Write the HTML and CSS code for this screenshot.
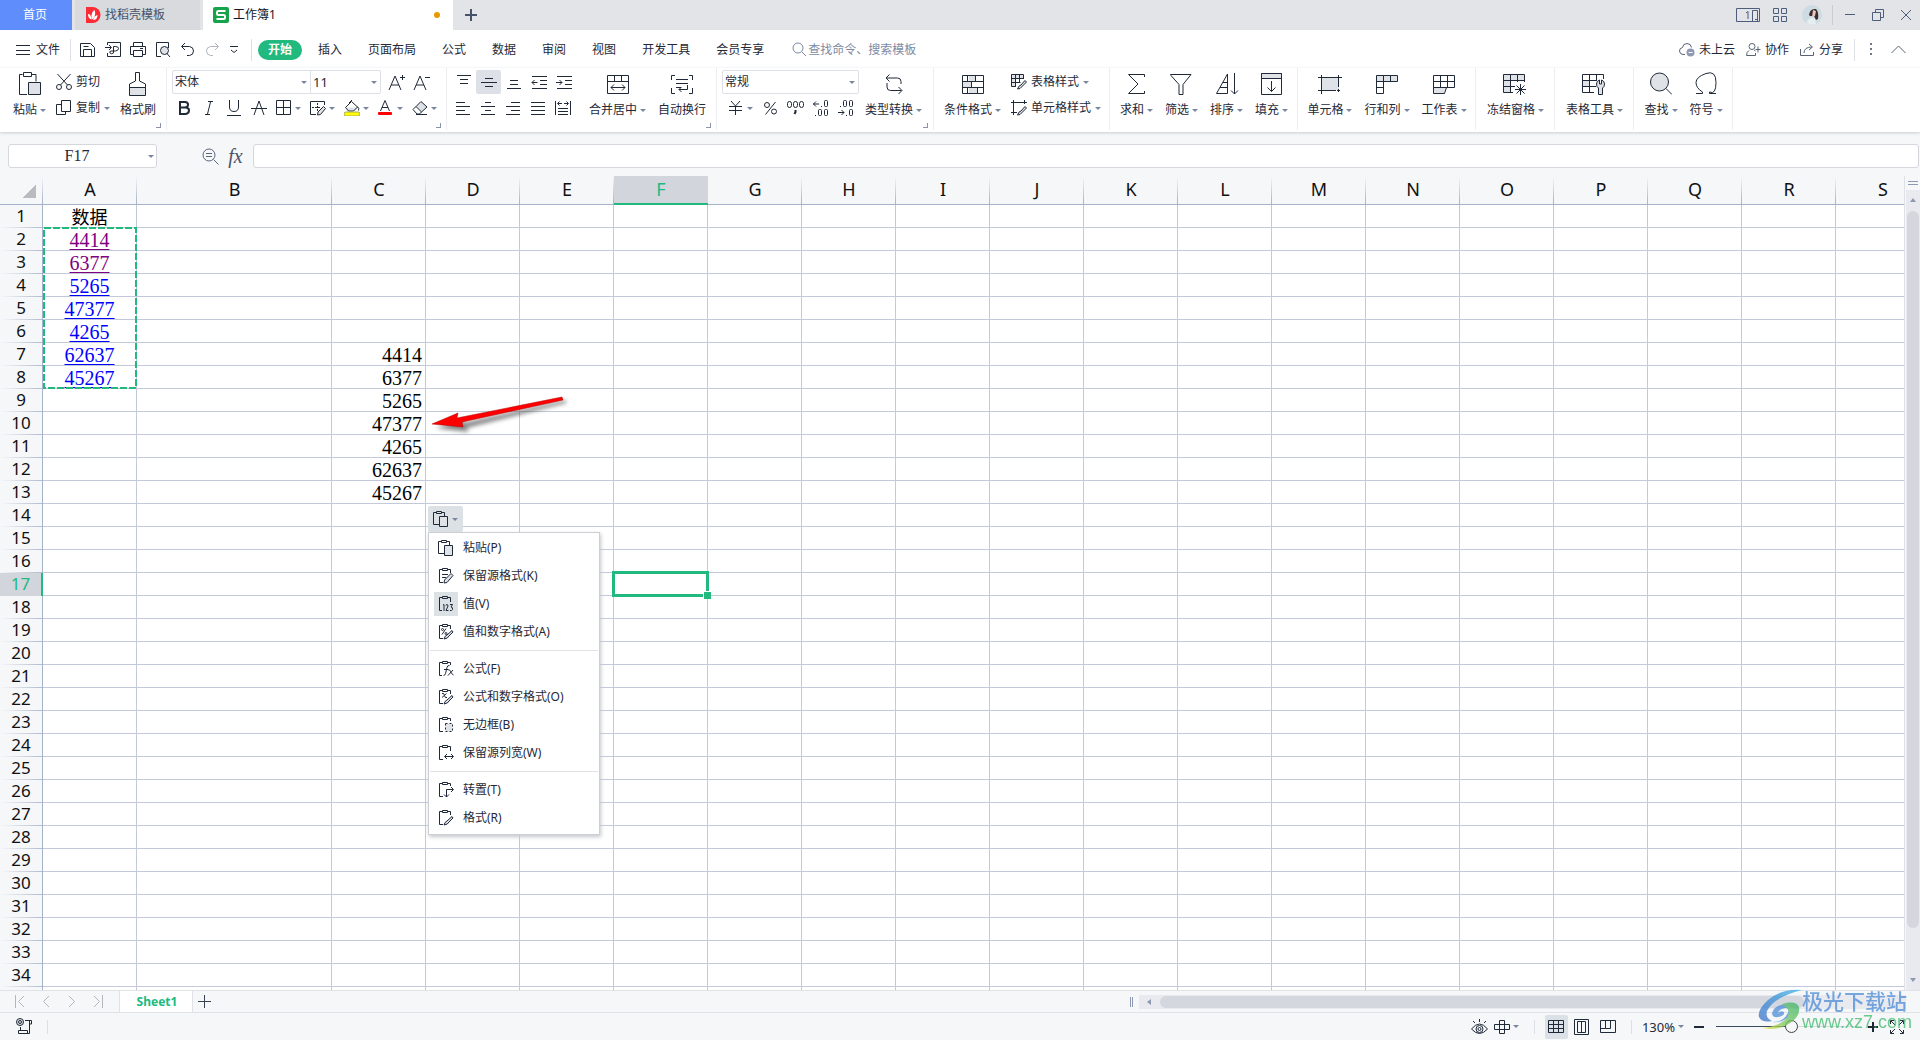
FILE: index.html
```
<!DOCTYPE html>
<html lang="zh-CN">
<head>
<meta charset="utf-8">
<title>工作簿1</title>
<link rel="stylesheet" href="styles.css">
</head>
<body>
<header class="tabbar">
  <button class="tab tab-home">首页</button>
  <button class="tab tab-doc">
    <svg width="16" height="16" viewBox="0 0 16 16"><path d="M1 0h6.500a8 8 0 0 1 0 16H1z" fill="#fb2c36"/><path d="M6.500 12.500C3.500 11.500 3 9 3 7c2 0 3.500 2 3.500 5.500zM7 12.500C6 9 6.500 5 9.500 3c1.500 4 .5 7-2.500 9.500zM8 13c.5-2.500 2-4.500 4.500-5 0 3-1.500 5-4.500 5z" fill="#fff"/></svg>
    <span>找稻壳模板</span>
  </button>
  <button class="tab tab-active">
    <svg width="16" height="16" viewBox="0 0 16 16"><rect width="16" height="16" rx="2" fill="#17a34a"/><path d="M12.500 4H5.500Q4 4 4 5.500V6.500Q4 8 5.500 8H10.500Q12 8 12 9.500V10.500Q12 12 10.500 12H3.500" fill="none" stroke="#fff" stroke-width="2"/></svg>
    <span>工作簿1</span><i class="dot"></i>
  </button>
  <button class="tab-add" aria-label="新建"><svg class="ic" width="14" height="14" viewBox="0 0 14 14"><path d="M7 1v12M1 7h12" stroke-width="2"/></svg></button>
  <div class="window-tools">
    <button aria-label="窗口" class="wt-wide"><svg class="ic" width="24" height="15" viewBox="0 0 24 15"><path d="M.5.500h23v13H.5zM16.500 2.500h5v11h-5zM19 11.500h2M10 5l2-1.500V11"/></svg></button>
    <button aria-label="应用" class="wt-apps"><svg class="ic" width="15" height="15" viewBox="0 0 15 15"><path d="M.5.500h5v5h-5zM8.500.500h5v5h-5zM.5 8.500h5v5h-5zM8.500 8.500h5v5h-5z"/></svg></button>
    <button aria-label="账户" class="avatar"><svg width="20" height="20" viewBox="0 0 20 20"><circle cx="10" cy="10" r="10" fill="#ccdce2"/><path d="M5 16q4-6 8-2l1 5q-5 2-9-1z" fill="#e6eef0"/><path d="M7 10q1-7 7-6 3 3 2 10l-2 1-2-4-4 0z" fill="#3d2c2d"/><path d="M11 5l3 1-1 5-3 1z" fill="#e9c9bd"/></svg></button>
    <i class="rule"></i>
    <button aria-label="最小化" class="win"><svg class="ic" width="12" height="12" viewBox="0 0 12 12"><path d="M1 5.500h10"/></svg></button>
    <button aria-label="还原" class="win"><svg class="ic" width="12" height="12" viewBox="0 0 12 12"><path d="M.5 3.500h8v8h-8zM3.500 3V.500h8v8H9"/></svg></button>
    <button aria-label="关闭" class="win"><svg class="ic" width="12" height="12" viewBox="0 0 12 12"><path d="M1 1l10 10M11 1L1 11"/></svg></button>
  </div>
</header>

<nav class="menubar">
  <button class="file"><svg class="ic" width="14" height="12" viewBox="0 0 14 12"><path d="M0 1.500h14M0 6.500h14M0 10.500h14"/></svg>文件</button>
  <i class="rule"></i>
  <div class="quick">
    <button aria-label="保存"><svg class="ic" width="16" height="16" viewBox="0 0 16 16"><path d="M.5 1.500h10l4 4v9H.5zM3.500 14V7.500h8V14M3.500 4.500h5"/></svg></button>
    <button aria-label="输出"><svg class="ic" width="16" height="16" viewBox="0 0 16 16"><path d="M2.500 3V.500h13v14h-13V11M0 5.500h6M4 3l2.500 2.500L4 8M8.500 11V4.500h2q3 0 3 2t-3 2.500H6Q4 9.500 5 11t3.500 0"/></svg></button>
    <button aria-label="打印"><svg class="ic" width="16" height="16" viewBox="0 0 16 16"><path d="M3.500 4.500v-4h9v4M3.500 12.500h-3v-8h15v8h-3M3.500 8.500h9v6h-9zM10 6.500h3"/></svg></button>
    <button aria-label="打印预览"><svg class="ic" width="16" height="16" viewBox="0 0 16 16"><path d="M6 14.500H1.500v-14h12V6"/><circle class="tone" cx="9.500" cy="8.500" r="4"/><path d="M12 11.500l3 3.500"/></svg></button>
    <button aria-label="撤销"><svg class="ic" width="16" height="16" viewBox="0 0 16 16"><path d="M5 1L1.500 4.500 5 8M2 4.500h7.500q4 .500 4 4.500t-4 4.500H7"/></svg></button>
    <button aria-label="恢复" class="off"><svg class="ic" width="16" height="16" viewBox="0 0 16 16"><path d="M10 1l3.500 3.500L10 8M13 4.500H5.500q-4 .500-4 4.500t4 4.500H8"/></svg></button>
    <button aria-label="更多"><svg class="ic" width="8" height="8" viewBox="0 0 8 8"><path d="M0 .500h8M1 4l3 2.500L7 4"/></svg></button>
  </div>
  <i class="rule"></i>
  <div class="menus">
    <button class="on">开始</button><button>插入</button><button>页面布局</button><button>公式</button><button>数据</button><button>审阅</button><button>视图</button><button>开发工具</button><button>会员专享</button>
  </div>
  <label class="search"><svg class="ic" width="15" height="15" viewBox="0 0 15 15"><circle cx="6" cy="6" r="5"/><path d="M10 10l4 4"/></svg><input type="text" placeholder="查找命令、搜索模板" aria-label="搜索"></label>
  <div class="share">
    <button><svg class="ic" width="16" height="14" viewBox="0 0 16 14"><path d="M6 11.500H4Q.5 11 .5 8t3-3.500Q4 .500 8 .500t4.500 4"/><circle cx="11.500" cy="9.500" r="4" fill="#8f99b3" stroke="none"/><path d="M9.500 9.500h4" stroke="#fff"/></svg>未上云</button>
    <button><svg class="ic" width="15" height="14" viewBox="0 0 15 14"><circle cx="6" cy="3.500" r="3"/><path d="M3 7.500Q.5 9 .5 12.500h9V10M8 7q1 .500 1.500 1M12 3.500v6M9.500 6.500h5"/></svg>协作</button>
    <button><svg class="ic" width="15" height="14" viewBox="0 0 15 14"><path d="M.5 6v6.500h13V9M4 10q0-6 8-6M9 1l3.500 3L9 7"/></svg>分享</button>
    <i class="rule"></i>
    <button aria-label="更多" class="dots"><svg width="3" height="13" viewBox="0 0 3 13"><path d="M0 0h2v2H0zM0 5h2v2H0zM0 10h2v2H0z" fill="#71778a"/></svg></button>
    <button aria-label="收起"><svg class="ic" width="15" height="9" viewBox="0 0 15 9"><path d="M.5 8l7-7 7 7"/></svg></button>
  </div>
</nav>

<section class="ribbon">
  <div class="group g-clip">
    <button class="big"><svg class="ic" width="22" height="24" viewBox="0 0 22 24"><path d="M8 22.500H.5v-20h3M13 2.500h4v7M4.500.500h8v4h-8z"/><path class="tone" d="M9.500 10.500h12v12h-12z"/></svg><span>粘贴<i class="caret"></i></span></button>
    <div class="stack">
      <button class="small"><svg class="ic" width="16" height="16" viewBox="0 0 16 16"><path d="M1.500 0l10 11M14.500 0l-10 11"/><circle cx="3" cy="13" r="2.500"/><circle cx="13" cy="13" r="2.500"/></svg>剪切</button>
      <button class="small"><svg class="ic" width="16" height="16" viewBox="0 0 16 16"><path d="M5.500.500h9v11h-9zM5 4.500H.5v10h9V12"/></svg>复制<i class="caret"></i></button>
    </div>
    <button class="big"><svg class="ic" width="20" height="24" viewBox="0 0 20 24"><path d="M7.500 9V.500h4V9l6 3v11h-16V12z"/><path class="tone" d="M1.500 15.500h16v8h-16z"/></svg><span>格式刷</span></button>
    <i class="corner"></i>
  </div>
  <div class="group g-font">
    <div class="stack">
      <div class="row">
        <label class="combo font-name"><select aria-label="字体"><option>宋体</option></select></label><label class="combo font-size"><select aria-label="字号"><option>11</option></select></label>
        <button class="sq" aria-label="增大字号"><svg class="ic" width="17" height="17" viewBox="0 0 17 17"><path d="M1 16L7 2l6 14M3 11h8M12 3.500h5M14.500 1v5"/></svg></button>
        <button class="sq" aria-label="减小字号"><svg class="ic" width="17" height="17" viewBox="0 0 17 17"><path d="M1 16L7 2l6 14M3 11h8M12 3.500h5"/></svg></button>
      </div>
      <div class="row marks">
        <button class="sq" aria-label="加粗"><svg class="ic" width="16" height="16" viewBox="0 0 16 16"><path d="M4 2h5q3 0 3 2.700T9 7.500H4zM4 7.500h5.500q3.500 0 3.500 3T9.500 14H4z" stroke-width="2"/></svg></button>
        <button class="sq" aria-label="倾斜"><svg class="ic" width="16" height="16" viewBox="0 0 16 16"><path d="M7 1.500h5M4 14.500h5M9.500 2l-3 12"/></svg></button>
        <button class="sq" aria-label="下划线"><svg class="ic" width="16" height="16" viewBox="0 0 16 16"><path d="M3.500 0v7q0 4.500 4.500 4.500T12.500 7V0M1 15.500h14"/></svg></button>
        <button class="sq" aria-label="删除线"><svg class="ic" width="16" height="16" viewBox="0 0 16 16"><path d="M3 15L8 1l5 14M0 8.500h16"/></svg></button>
        <button class="drop" aria-label="边框"><svg class="ic" width="16" height="16" viewBox="0 0 16 16"><path d="M.5.500h14v14H.5zM7.500.500v14M.5 7.500h14"/></svg><i class="caret"></i></button>
        <button class="drop" aria-label="绘图边框"><svg class="ic" width="16" height="16" viewBox="0 0 16 16"><path d="M14.500 5V1.500H.5v13H6"/><path d="M2 7.500h9M7.500 3v8" stroke-dasharray="2 1"/><path class="tone" d="M13.500 6.500l2 2-5 6-3 .5.500-3z"/></svg><i class="caret"></i></button>
        <button class="drop" aria-label="填充颜色"><svg class="ic" width="16" height="16" viewBox="0 0 16 16"><path class="tone" d="M2 7.500h12l-2 3H4z" stroke="none"/><path d="M7.500 1.500l6 5.500-4 4h-5L1.500 7.500zM5 3L8 0M13.500 6.500q2 2 1 4"/><rect x="0" y="12" width="16" height="4" rx="2" fill="#ff0" stroke="#a9a95a"/></svg><i class="caret"></i></button>
        <button class="drop" aria-label="字体颜色"><svg class="ic" width="16" height="16" viewBox="0 0 16 16"><path d="M2.500 11L7 .500 11.500 11M4 7.500h6"/><rect x="0" y="12" width="14" height="3" rx="1" fill="#f00" stroke="none"/></svg><i class="caret"></i></button>
        <button class="drop" aria-label="清除"><svg class="ic" width="16" height="16" viewBox="0 0 16 16"><path class="tone" d="M9 1.500L15 7 9.500 12 4 6.500z"/><path d="M4 6.500L1 9.500l4 4.500h2.500l2-2M4 14.500h11"/></svg><i class="caret"></i></button>
      </div>
    </div>
    <i class="corner"></i>
  </div>
  <div class="group g-align">
    <div class="stack aligns">
      <div class="row">
        <button class="sq" aria-label="顶端对齐"><svg class="ic" width="16" height="16" viewBox="0 0 16 16"><path d="M1 1.500h14M4 5.500h8M4 9.500h8"/></svg></button>
        <button class="sq on" aria-label="垂直居中"><svg class="ic" width="16" height="16" viewBox="0 0 16 16"><path d="M4 4.500h8M0 8.500h16M4 12.500h8"/></svg></button>
        <button class="sq" aria-label="底端对齐"><svg class="ic" width="16" height="16" viewBox="0 0 16 16"><path d="M4 6.500h8M4 10.500h8M1 14.500h14"/></svg></button>
        <button class="sq" aria-label="减少缩进"><svg class="ic" width="16" height="16" viewBox="0 0 16 16"><path d="M1 2.500h15M1 14.500h15M9 6.500h7M9 10.500h7M1 8.500h5.500M3.500 6L1 8.500 3.500 11"/></svg></button>
        <button class="sq" aria-label="增加缩进"><svg class="ic" width="16" height="16" viewBox="0 0 16 16"><path d="M1 2.500h15M1 14.500h15M9 6.500h7M9 10.500h7M0 8.500h6M3.500 6L6 8.500 3.500 11"/></svg></button>
      </div>
      <div class="row marks">
        <button class="sq" aria-label="左对齐"><svg class="ic" width="16" height="16" viewBox="0 0 16 16"><path d="M1 2.500h9M1 6.500h14M1 10.500h9M1 14.500h14"/></svg></button>
        <button class="sq" aria-label="水平居中"><svg class="ic" width="16" height="16" viewBox="0 0 16 16"><path d="M5 2.500h6M1 6.500h14M5 10.500h6M1 14.500h14"/></svg></button>
        <button class="sq" aria-label="右对齐"><svg class="ic" width="16" height="16" viewBox="0 0 16 16"><path d="M6 2.500h9M1 6.500h14M6 10.500h9M1 14.500h14"/></svg></button>
        <button class="sq" aria-label="两端对齐"><svg class="ic" width="16" height="16" viewBox="0 0 16 16"><path d="M1 2.500h14M1 6.500h14M1 10.500h14M1 14.500h14"/></svg></button>
        <button class="sq" aria-label="分散对齐"><svg class="ic" width="16" height="16" viewBox="0 0 16 16"><path d="M.5 1v14M15.500 1v14M3 3.500h4M9 3.500h4M4.500 1.500l-2 2 2 2M11.500 1.500l2 2-2 2M3 8.500h10M3 11.500h10M3 14.500h10"/></svg></button>
      </div>
    </div>
    <button class="big"><svg class="ic" width="22" height="24" viewBox="0 0 22 24"><path d="M.5 3.500h21v18H.5zM.5 9.500h21M7.500 4v5M14.500 4v5M4 15.500h14M7 12.500l-3 3 3 3M15 12.500l3 3-3 3"/></svg><span>合并居中<i class="caret"></i></span></button>
    <button class="big"><svg class="ic" width="22" height="24" viewBox="0 0 22 24"><path d="M4 3.500H.5V8M18 3.500h3.500V8M.5 16v5.500H4M21.500 16v5.500H18M5 7.500h12M5 11.500h12M5 15.500h5M16.500 13v4.500H8M10.500 15L8 17.500l2.500 2.500"/></svg><span>自动换行</span></button>
    <i class="corner"></i>
  </div>
  <div class="group g-num">
    <div class="stack">
      <label class="combo num-format"><select aria-label="数字格式"><option>常规</option></select></label>
      <div class="row nums">
        <button class="drop" aria-label="货币"><svg class="ic" width="16" height="16" viewBox="0 0 16 16"><path d="M3 1l4.500 5L12 1M1 6.500h13M1 10.500h13M7.500 6v9"/></svg><i class="caret"></i></button>
        <button class="sq" aria-label="百分比"><svg class="ic" width="16" height="16" viewBox="0 0 16 16"><circle cx="4" cy="5" r="2.500"/><circle cx="11" cy="11.500" r="2.500"/><path d="M12.500 2l-10 12.500"/></svg></button>
        <button class="sq" aria-label="千位分隔"><svg class="ic" width="17" height="16" viewBox="0 0 17 16"><rect x=".5" y="1.500" width="4" height="6" rx="2"/><rect x="6.500" y="1.500" width="4" height="6" rx="2"/><rect x="12.500" y="1.500" width="4" height="6" rx="2"/><path d="M8.500 10v2l-1 2" stroke-width="2"/></svg></button>
        <button class="sq" aria-label="增加小数"><svg class="ic" width="16" height="17" viewBox="0 0 16 17"><path d="M0 4h6M3 1.500L.5 4 3 6.500M8 6.500h1M2 15.500h1"/><rect x="11.500" y=".5" width="3" height="6" rx="1"/><rect x="5.500" y="9.500" width="3" height="6" rx="1"/><rect x="11.500" y="9.500" width="3" height="6" rx="1"/></svg></button>
        <button class="sq" aria-label="减少小数"><svg class="ic" width="16" height="17" viewBox="0 0 16 17"><path d="M0 12.500h6M3.500 10L6 12.500 3.500 15M8 15.500h1M2 6.500h1"/><rect x="11.500" y="9.500" width="3" height="6" rx="1"/><rect x="5.500" y=".5" width="3" height="6" rx="1"/><rect x="11.500" y=".5" width="3" height="6" rx="1"/></svg></button>
      </div>
    </div>
    <button class="big"><svg class="ic" width="20" height="24" viewBox="0 0 20 24"><path d="M5.500 2.500L2 6l3.500 3.500M2 6h11.500q3.500 0 3.500 3.500V12M3 11v4q0 3.500 3.500 3.500h11M14.500 15l3.500 3.500-3.500 3.500"/></svg><span>类型转换<i class="caret"></i></span></button>
    <i class="corner"></i>
  </div>
  <div class="group g-style">
    <button class="big"><svg class="ic" width="22" height="24" viewBox="0 0 22 24"><path class="tone" d="M7 4h6v6H7zM1 10h9v6H1zM7 16h9v6H7z" stroke="none"/><path d="M.5 3.500h21v18H.5zM.5 9.500h21M.5 15.500h21M5.500 4v6M13.500 4v6M9.500 10v5M5.500 15v6M15.500 15v6"/></svg><span>条件格式<i class="caret"></i></span></button>
    <div class="stack">
      <button class="small"><svg class="ic" width="16" height="16" viewBox="0 0 16 16"><path class="tone" d="M1 1h12v3H1zM1 4h3v9H1z" stroke="none"/><path d="M5 12.500H.5V.500h12V5M.5 4.500h12M.5 8.500h9M4.500 1v11M8.500 1v8"/><path class="tone" d="M14 6.500l1.500 1.500-5 5q-1 2-4 2 1.500-4 3.500-4z"/></svg>表格样式<i class="caret"></i></button>
      <button class="small"><svg class="ic" width="16" height="16" viewBox="0 0 16 16"><path d="M0 2.500h16M2.500 0v15M0 12.500h6M13.500 0v4"/><path class="tone" d="M14 6.500l1.500 1.500-5 5q-1 2-4 2 1.500-4 3.500-4z"/></svg>单元格样式<i class="caret"></i></button>
    </div>
  </div>
  <div class="group g-edit">
    <button class="big"><svg class="ic" width="18" height="24" viewBox="0 0 18 24"><path d="M17.500 5V2.500H1.500l9.500 9.500-9.500 9.500h16V19"/></svg><span>求和<i class="caret"></i></span></button>
    <button class="big"><svg class="ic" width="22" height="24" viewBox="0 0 22 24"><path d="M.5 2.500h20.500l-8 10v10h-4v-10l-8-9z"/></svg><span>筛选<i class="caret"></i></span></button>
    <button class="big"><svg class="ic" width="24" height="24" viewBox="0 0 24 24"><path d="M1.500 21.500L12.500 2v19.500zM8 10.500h4M5 15.500h7M19.500 1v21M16 18.500l3.500 3.500 3.500-3.500"/></svg><span>排序<i class="caret"></i></span></button>
    <button class="big"><svg class="ic" width="22" height="24" viewBox="0 0 22 24"><path d="M.5 1.500h20v21H.5z"/><path class="tone" d="M.5 1.500h20v5H.5z"/><path d="M10.500 9v10.500M6.500 15.500l4 4 4-4"/></svg><span>填充<i class="caret"></i></span></button>
  </div>
  <div class="group g-cells">
    <button class="big"><svg class="ic" width="24" height="24" viewBox="0 0 24 24"><path class="tone" d="M3 6h18v12H3z" stroke="none"/><path d="M0 5.500h24M0 18.500h18M3.500 3v19M20.500 3v12M19 18.500h3M20.500 17v3"/></svg><span>单元格<i class="caret"></i></span></button>
    <button class="big"><svg class="ic" width="22" height="24" viewBox="0 0 22 24"><path class="tone" d="M.5 3.500h21v6h-21z"/><path d="M.5 9.500h7v12h-7zM7.500 4v5M14.500 4v5M.5 15.500h7"/></svg><span>行和列<i class="caret"></i></span></button>
    <button class="big"><svg class="ic" width="22" height="24" viewBox="0 0 22 24"><path class="tone" d="M.5 15.500h13l-2 6H.5z"/><path d="M.5 3.500h21v12H.5zM.5 9.500h21M7.500 4v11M14.500 4v11"/></svg><span>工作表<i class="caret"></i></span></button>
  </div>
  <div class="group g-one">
    <button class="big"><svg class="ic" width="24" height="24" viewBox="0 0 24 24"><path class="tone" d="M1 3h20v5H1zM1 8h6v12H1z" stroke="none"/><path d="M10 20.500H.5v-18h21V10M.5 8.500h21M.5 14.500H12M7.500 3v17M14.500 3v7M17.500 12v11M12 17.500h11M13.500 13.500l8 8M21.500 13.500l-8 8"/></svg><span>冻结窗格<i class="caret"></i></span></button>
  </div>
  <div class="group g-one">
    <button class="big"><svg class="ic" width="24" height="24" viewBox="0 0 24 24"><path class="tone" d="M1 8h6v6H1z" stroke="none"/><path d="M12 20.500H.5v-18h21V7M.5 8.500H15M.5 14.500H14M7.500 3v17M14.500 3v5"/><path class="tone" d="M17.500 8v4h2V8q3 1 3 4t-2 4v6.500h-4V16q-2-1-2-4t3-4z"/></svg><span>表格工具<i class="caret"></i></span></button>
  </div>
  <div class="group g-find">
    <button class="big"><svg class="ic" width="22" height="24" viewBox="0 0 22 24"><circle class="tone" cx="9.500" cy="10" r="9"/><path d="M16 16.500l6 6"/></svg><span>查找<i class="caret"></i></span></button>
    <button class="big"><svg class="ic" width="22" height="24" viewBox="0 0 22 24"><path d="M1 21.500h6.500V20Q1 16 1 10.500T11 1.500t10 9T14.500 20v1.500H21"/></svg><span>符号<i class="caret"></i></span></button>
  </div>
</section>

<section class="formula">
  <div class="namebox"><input type="text" value="F17" aria-label="名称框"><i class="caret"></i></div>
  <button class="lens" aria-label="浏览公式"><svg class="ic" width="17" height="17" viewBox="0 0 17 17"><circle cx="7" cy="7" r="6"/><path d="M4 5.500h6M4 8.500h6M11.500 11.500l5 5"/></svg></button>
  <button class="fx" aria-label="插入函数"><i>fx</i></button>
  <input class="expr" type="text" aria-label="编辑栏">
</section>

<main class="sheet">
  <div class="grid">
    <table class="cells" id="cells"></table>
    <svg class="arrow" width="150" height="50" viewBox="0 0 150 50"><g filter="url(#soft)" opacity=".6"><path d="M6 33l28-9-1 4L136 5v3L36 33l3 4z" fill="#333"/></g><path d="M2 29l26-11-1 5L132 2l1 3L32 27l1 5z" fill="#f00" stroke="#b00000" stroke-width=".5"/><filter id="soft"><feGaussianBlur stdDeviation="2"/></filter></svg>
    <div class="paste">
      <button class="paste-tag" aria-label="粘贴选项"><svg class="ic" width="16" height="16" viewBox="0 0 16 16"><path d="M6 13.500H.5v-12H3M9 1.500h2.500V5M3.500.500h5v2h-5z"/><path class="tone" d="M6.500 5.500h8v10h-8z"/></svg><i class="caret"></i></button>
      <div class="paste-menu" role="menu">
        <button role="menuitem"><svg class="ic" width="16" height="16" viewBox="0 0 16 16"><path d="M6 13.500H.5v-12H3M9 1.500h2.500V5M3.500.500h5v2h-5z"/><path class="tone" d="M6.500 5.500h8v10h-8z"/></svg>粘贴(P)</button>
        <button role="menuitem"><svg class="ic" width="16" height="16" viewBox="0 0 16 16"><path d="M5 14.500H1.500v-13H4M10 1.500h2.500V5M4.500.500h5v2h-5zM4 6.500h6M4 9.500h4"/><path class="tone" d="M13 5.500l2 2-6 7-3 .500.500-3z"/></svg>保留源格式(K)</button>
        <button role="menuitem" class="on"><svg class="ic" width="16" height="16" viewBox="0 0 16 16"><path d="M4 14.500H1.500v-13H4M10 1.500h2.500V6M4.500.500h5v2h-5z"/><path d="M5 9l1-.500V15M8 9.500q0-1 1-1t1 1.500L8 14.500h2.500M12 8.500h2.500l-1.500 2.500q2 0 1.500 2.500-.5 1.500-2.500 1"/></svg>值(V)</button>
        <button role="menuitem"><svg class="ic" width="16" height="16" viewBox="0 0 16 16"><path d="M5 14.500H1.500v-13H4M10 1.500h2.500V5M4.500.500h5v2h-5zM8 4.500l-4 6"/><circle cx="4.500" cy="5.500" r="1"/><circle cx="8" cy="9.500" r="1"/><path class="tone" d="M14 6.500l1 1.500-4 4q-1 2.500-5 3 1-3.500 3-4z"/></svg>值和数字格式(A)</button>
        <hr>
        <button role="menuitem"><svg class="ic" width="16" height="16" viewBox="0 0 16 16"><path d="M4 14.500H1.500v-13H4M10 1.500h2.500V4M4.500.500h5v2h-5zM11.500 4.500q-2-.5-2.500 2l-1.500 6q-.5 2-2 2M6 8.500h4.500M10.500 9q1-1 2 1.500t3 3.500M15 9l-5 5.500"/></svg>公式(F)</button>
        <button role="menuitem"><svg class="ic" width="16" height="16" viewBox="0 0 16 16"><path d="M5 14.500H1.500v-13H4M10 1.500h2.500V5M4.500.500h5v2h-5zM4 4.500q2-1 2.500 2t2.500 2M8.500 4.500l-4.500 4"/><path class="tone" d="M14 6.500l1 1.500-4 4q-1 2.500-5 3 1-3.500 3-4z"/></svg>公式和数字格式(O)</button>
        <button role="menuitem"><svg class="ic" width="16" height="16" viewBox="0 0 16 16"><path d="M5 14.500H1.500v-13H4M10 1.500h2.500V4M4.500.500h5v2h-5z"/><path class="tone" d="M7.500 6.500h7v8h-7z" stroke-dasharray="2 2"/></svg>无边框(B)</button>
        <button role="menuitem"><svg class="ic" width="16" height="16" viewBox="0 0 16 16"><path d="M5 14.500H1.500v-13H4M10 1.500h2.500V6M4.500.500h5v2h-5zM7 11.500h8M9 9l-2.500 2.500L9 14M13 9l2.500 2.500L13 14"/></svg>保留源列宽(W)</button>
        <hr>
        <button role="menuitem"><svg class="ic" width="16" height="16" viewBox="0 0 16 16"><path d="M5 14.500H1.500v-13H4M10 1.500h2.500V4M4.500.500h5v2h-5zM8.500 15V7.500H15M6 12.500L8.500 15l2.500-2.500M13 5l2.500 2.500L13 10"/></svg>转置(T)</button>
        <button role="menuitem"><svg class="ic" width="16" height="16" viewBox="0 0 16 16"><path d="M5 14.500H1.500v-13H4M10 1.500h2.500V5M4.500.500h5v2h-5z"/><path class="tone" d="M14 6.500l1 1.500-4 4q-1 2.500-5 3 1-3.500 3-4z"/></svg>格式(R)</button>
      </div>
    </div>
  </div>
  <div class="vscroll">
    <i class="split"></i>
    <div class="track"><i class="up"></i><i class="thumb"></i><i class="down"></i></div>
  </div>
</main>

<footer class="sheets">
  <div class="nav">
    <button aria-label="第一个"><svg class="ic" width="10" height="13" viewBox="0 0 10 13"><path d="M.5 0v13M9 1L3.500 6.500 9 12"/></svg></button>
    <button aria-label="上一个"><svg class="ic" width="10" height="13" viewBox="0 0 10 13"><path d="M8 1L2.500 6.500 8 12"/></svg></button>
    <button aria-label="下一个"><svg class="ic" width="10" height="13" viewBox="0 0 10 13"><path d="M2 1l5.500 5.500L2 12"/></svg></button>
    <button aria-label="最后一个"><svg class="ic" width="10" height="13" viewBox="0 0 10 13"><path d="M9.500 0v13M1 1l5.500 5.500L1 12"/></svg></button>
  </div>
  <button class="sheet-tab">Sheet1</button>
  <button class="sheet-add" aria-label="新建工作表"><svg class="ic" width="13" height="13" viewBox="0 0 13 13"><path d="M6.500 0v13M0 6.500h13"/></svg></button>
  <div class="hscroll"><i class="grip"></i><div class="htrack"><i class="left"></i><i class="hthumb"></i></div></div>
</footer>

<footer class="status">
  <button class="macro" aria-label="录制"><svg class="ic" width="16" height="17" viewBox="0 0 16 17"><circle class="tone" cx="4" cy="4" r="3.500"/><circle cx="4" cy="4" r="1.500"/><path d="M9 2.500h4.500V15.500h-11v-3h9V15M4.500 9v3M13 2.500h2.500V6H14"/></svg></button>
  <i class="rule"></i>
  <div class="views">
    <button class="eye" aria-label="护眼"><svg class="ic" width="17" height="16" viewBox="0 0 17 16"><path d="M.5 10q8-10 16 0-8 9-16 0zM8.500 0v3M2 2l2 2M15 2l-2 2"/><circle cx="8.500" cy="10" r="3.500"/><circle cx="8.500" cy="10" r="1.500"/></svg></button>
    <button class="cross" aria-label="阅读"><svg class="ic" width="16" height="16" viewBox="0 0 16 16"><path d="M5.500 1.500h5v13h-5zM.5 5.500h15v5H.5z"/></svg><i class="caret"></i></button>
    <i class="rule"></i>
    <button class="view on" aria-label="普通视图"><svg class="ic" width="16" height="14" viewBox="0 0 16 14"><path d="M.5.500h15v12H.5zM.5 4.500h15M.5 8.500h15M5.500.500v12M10.500.500v12"/></svg></button>
    <button class="view" aria-label="分页预览"><svg class="ic" width="16" height="16" viewBox="0 0 16 16"><path d="M.5.500h14v15H.5zM3.500 2.500h8v11h-8zM7.500 3v10"/></svg></button>
    <button class="view" aria-label="页面布局"><svg class="ic" width="16" height="14" viewBox="0 0 16 14"><path d="M.5.500h15v12H.5zM5.500.500v8M.5 8.500h10v-8"/></svg></button>
    <i class="rule"></i>
    <button class="zoom">130%<i class="caret"></i></button>
    <button class="step" aria-label="缩小"><svg class="ic" width="10" height="10" viewBox="0 0 10 10"><path d="M0 5h10" stroke-width="2"/></svg></button>
    <input type="range" aria-label="显示比例" min="0" max="100" value="52">
    <button class="step plus" aria-label="放大"><svg class="ic" width="10" height="10" viewBox="0 0 10 10"><path d="M0 5h10M5 0v10" stroke-width="2"/></svg></button>
    <button class="full" aria-label="全屏"><svg class="ic" width="14" height="14" viewBox="0 0 14 14"><path d="M.5 4V.500H4M10 .500h3.500V4M13.500 10v3.500H10M4 13.500H.5V10M1 1l4 4M13 1L9 5M13 13L9 9M1 13l4-4"/></svg></button>
  </div>
</footer>

<div class="mark">
  <svg width="44" height="42" viewBox="0 0 44 42"><defs><linearGradient id="b" x1="1" y1="0" x2="0" y2="1"><stop offset="0" stop-color="#39b3e8"/><stop offset="1" stop-color="#3d6fc4"/></linearGradient><linearGradient id="g" x1="1" y1="0" x2="0" y2="1"><stop offset="0" stop-color="#35b36a"/><stop offset=".6" stop-color="#7cc85a"/><stop offset="1" stop-color="#f2e23c"/></linearGradient></defs><path d="M44 1Q24-1 10 11-1 21 1 28q3 6 13 4-7-3-5-10Q16 8 44 1z" fill="url(#b)"/><path d="M28 15q-12 1-14 9 0 5 6 4 7-1 6-5-5-2-6 2 0-5 8-6 5 1 0 8-4 6-14 6 8 1 16-4 8-8-2-14z" fill="#4d8fd8"/><path d="M24 15q14-4 17 3 2 10-12 18-12 6-25 3 14-1 23-8 9-9-3-16z" fill="url(#g)"/></svg>
  <div><b>极光下载站</b><span>www.xz7.com</span></div>
</div>
<script src="script.js"></script>
</body>
</html>
```
FILE: styles.css
```
* { box-sizing: border-box; }
html, body { height: 100%; margin: 0; overflow: hidden; }
body {
  display: flex; flex-direction: column; position: relative;
  font: 12px/16px "Noto Sans", "Noto Sans CJK SC", sans-serif;
  color: #1f2937; background: #f6f7f9;
}
button, input, select { font: inherit; color: inherit; border: 0; padding: 0; margin: 0; background: none; outline: 0; }
button { display: flex; align-items: center; justify-content: center; white-space: nowrap; flex: none; }
svg { display: block; flex: none; }
.ic { fill: none; stroke: currentColor; }
.tone { fill: #dfe2e6; }
.caret { border: 3px solid transparent; border-top-color: #7a869f; border-bottom: 0; margin-left: 3px; flex: none; }
.rule { width: 1px; background: #dcdfe5; flex: none; }

.tabbar { display: flex; height: 30px; flex: none; background: #e2e4e8; color: #44536b; }
.tab { height: 30px; gap: 4px; }
.tab-home { width: 72px; padding-right: 2px; background: #5f8dfb; color: #fff; }
.tab-doc { width: 125px; margin-left: 3px; padding-left: 10px; background: #d8dade; justify-content: flex-start; }
.tab-active { width: 250px; margin-left: 3px; padding: 0 13px 0 10px; background: #fff; color: #111827; justify-content: flex-start; }
.dot { width: 6px; height: 6px; border-radius: 3px; background: #e69a00; margin-left: auto; }
.tab-add { width: 36px; }
.window-tools { display: flex; align-items: center; margin-left: auto; color: #4e5d7c; }
.wt-apps { margin-left: 13px; }
.avatar { margin: 0 10px 0 14px; }
.window-tools .rule { height: 20px; background: #c9ccd3; margin-right: 3px; }
.win { width: 28px; height: 30px; }

.menubar { display: flex; align-items: center; height: 38px; flex: none; padding-top: 1px; background: #fff; }
.menubar > .rule, .share .rule { height: 22px; }
.file { gap: 6px; padding: 0 10px 0 16px; }
.quick { display: flex; align-items: center; gap: 9px; padding: 0 13px 0 9px; }
.quick button { min-width: 8px; }
.quick .off { color: #b3b6bd; }
.menus { display: flex; align-items: center; padding-left: 6px; }
.menus button { padding: 0 13px; height: 20px; }
.menus .on { background: #21b97e; color: #fff; font-weight: 700; border-radius: 10px; padding: 0 10px; margin-right: 3px; }
.search { display: flex; align-items: center; gap: 1px; padding-left: 15px; color: #7c8aa5; }
.search input { width: 140px; }
.search input::placeholder { color: #7c8aa5; opacity: 1; }
.share { display: flex; align-items: center; gap: 11px; margin-left: auto; padding-right: 14px; }
.share button { gap: 4px; }
.share svg { color: #5a6375; }
.share .dots { margin: 0 7px 0 4px; }

.ribbon { display: flex; height: 64px; flex: none; background: #fff; box-shadow: 0 1px 3px #c9ccd2; position: relative; }
.group { position: relative; display: flex; flex: none; height: 64px; }
.group::after { content: ""; position: absolute; right: 0; top: 0; height: 62px; width: 1px; background: #eceef1; }
.g-clip { width: 167px; padding-left: 7px; gap: 4px; }
.g-font { width: 280px; padding-left: 5px; }
.g-align { width: 270px; padding-left: 4px; }
.g-num { width: 217px; padding-left: 5px; }
.g-style { width: 176px; padding-left: 4px; gap: 4px; }
.g-edit { width: 188px; justify-content: center; }
.g-cells { width: 178px; justify-content: center; }
.g-one { width: 79px; justify-content: center; }
.g-find { width: 99px; justify-content: center; }
.big { flex-direction: column; justify-content: flex-start; height: 55px; padding: 4px 6px 0; }
.big span { display: flex; align-items: center; height: 24px; margin-top: 2px; }
.stack { display: flex; flex-direction: column; gap: 2px; padding-top: 2px; }
.small { height: 24px; gap: 4px; justify-content: flex-start; }
.small .caret { margin-left: 0; }
.row { display: flex; height: 24px; align-items: center; }
.sq { width: 25px; height: 24px; }
.marks .sq { padding-right: 1px; }
.sq.on { background: #dde1e7; border-radius: 2px; }
.drop { width: 34px; height: 24px; justify-content: flex-start; padding-left: 4px; }
.combo { display: flex; align-items: center; height: 24px; border: 1px solid #dddfe4; border-radius: 2px; padding: 0 3px 0 2px; }
.combo::after { content: ""; border: 3px solid transparent; border-top-color: #7a869f; border-bottom: 0; }
.combo select { appearance: none; flex: 1; min-width: 0; }
.font-name { width: 139px; border-radius: 2px 0 0 2px; }
.font-size { width: 71px; margin: 0 3px 0 -1px; border-radius: 0 2px 2px 0; font-size: 13px; }
.num-format { width: 137px; }
.aligns { margin-right: 7px; }
.nums { padding-left: 2px; }
.corner { position: absolute; right: 6px; bottom: 4px; width: 5px; height: 5px; border: solid #8b94a8; border-width: 0 1px 1px 0; }

.formula { display: flex; align-items: center; height: 44px; flex: none; padding: 4px 1px 0 8px; }
.namebox { display: flex; align-items: center; width: 149px; height: 24px; border: 1px solid #d5d7dd; border-radius: 3px; background: #fff; padding-right: 2px; }
.namebox input { flex: 1; min-width: 0; text-align: center; font: 16px/20px "Liberation Serif", serif; }
.lens { margin-left: 45px; color: #5c6780; }
.fx { width: 15px; margin: 0 10px 0 9px; font: 20px/20px "Liberation Serif", serif; color: #4a5468; }
.expr { flex: 1; min-width: 0; height: 24px; border: 1px solid #d5d7dd; border-radius: 3px; background: #fff; }

.sheet { display: flex; flex: 1; min-height: 0; }
.grid { flex: 1; min-width: 0; overflow: hidden; position: relative; background: #fff; }
.cells { table-layout: fixed; border-collapse: separate; border-spacing: 0; width: 1930px; }
.cells th { font-weight: 400; padding: 0 0 2px; color: #111; background: #f6f7f9 no-repeat; }
.cells thead th { height: 29px; font-size: 18px; line-height: 24px; border-bottom: 1px solid #a6b1ca; background-image: linear-gradient(#f6f7f9, #a6b1ca); background-size: 1px 100%; background-position: right; }
.cells thead th.on { background: #d2d5dc; color: #21b97e; border-bottom: 2px solid #21b97e; }
.cells thead .all { background-image: linear-gradient(135deg, transparent 50%, #b9bbc0 50%), linear-gradient(#f6f7f9, #a6b1ca); background-size: 14px 14px, 1px 100%; background-position: 22px 8px, right; }
.cells tbody th { height: 23px; font-size: 17px; line-height: 20px; border-right: 1px solid #a6b1ca; background-image: linear-gradient(90deg, #f6f7f9, #b3bbd0); background-size: 100% 1px; background-position: bottom; }
.cells tbody th.on { background: #d2d5dc; color: #21b97e; border-right: 2px solid #21b97e; }
.cells td { position: relative; height: 23px; padding: 0 3px; border: solid #c3c9da; border-width: 0 1px 1px 0; font: 20px/24px "Liberation Serif", serif; color: #000; }
.cells td > div { height: 22px; white-space: nowrap; }
.cells .mid { text-align: center; }
.cells .num { text-align: right; }
.cells .title { font: 18px/22px "Noto Sans CJK SC", sans-serif; }
.cells a { color: #00f; text-underline-offset: 2px; text-decoration-thickness: 1px; }
.cells a.seen { color: #800080; }
.ants { position: absolute; left: 0; top: -1px; fill: none; stroke: #21b97e; stroke-width: 2; stroke-dasharray: 7 2; z-index: 1; overflow: visible; }
.cells td > .cursor { position: absolute; inset: -2px; height: auto; border: 3px solid #21b97e; z-index: 1; }
.cursor::after { content: ""; position: absolute; right: -5px; bottom: -5px; width: 7px; height: 7px; background: #21b97e; border: solid #fff; border-width: 1px 0 0 1px; }
.arrow { position: absolute; left: 430px; top: 219px; }
.paste { position: absolute; left: 428px; top: 330px; }
.paste-tag { width: 35px; height: 26px; background: #dce1e6; border-radius: 2px; }
.paste-menu { width: 172px; background: #fff; border: 1px solid #cdcfd4; box-shadow: 1px 2px 4px #c5c7cc; padding: 1px 1px 2px; }
.paste-menu button { width: 100%; height: 28px; justify-content: flex-start; gap: 9px; padding-left: 8px; }
.paste-menu .on svg { background: #dce1e6; box-shadow: 0 0 0 4px #dce1e6; }
.paste-menu hr { border: 0; border-top: 1px solid #e0e2e6; margin: 4px 0; }

.vscroll { width: 16px; flex: none; display: flex; flex-direction: column; border-left: 1px solid #dfe1e7; padding-left: 1px; }
.split { height: 4px; margin: 5px 2px; border: solid #8d99b3; border-width: 1px 0; }
.track { flex: 1; background: #e9eaf0; display: flex; flex-direction: column; align-items: center; padding: 8px 1px; }
.up { border: 3px solid transparent; border-bottom: 4px solid #8d99b3; border-top: 0; }
.thumb { flex: 1; width: 12px; border-radius: 6px; background: #d5d7df; margin: 9px 0 50px; }
.down { border: 3px solid transparent; border-top: 4px solid #8d99b3; border-bottom: 0; }

.sheets { display: flex; height: 23px; flex: none; border: solid #e0e2e8; border-width: 1px 0; }
.nav { display: flex; align-items: center; gap: 16px; width: 119px; padding-left: 15px; color: #b3b6bd; }
.sheet-tab { width: 74px; padding-left: 2px; background: #fff; border: solid #e0e2e8; border-width: 0 1px; color: #21b97e; font-weight: 700; }
.sheet-add { width: 23px; color: #374151; }
.hscroll { display: flex; align-items: center; width: calc(41% + 3px); margin-left: auto; padding-right: 14px; }
.grip { width: 3px; height: 10px; border: solid #8d99b3; border-width: 0 1px; margin-right: 6px; }
.htrack { flex: 1; height: 14px; background: #e9eaf0; display: flex; align-items: center; padding: 0 102px 0 8px; }
.left { border: 3px solid transparent; border-right: 4px solid #8d99b3; border-left: 0; }
.hthumb { flex: 1; height: 12px; border-radius: 6px; background: #d5d7df; margin-left: 9px; }

.status { display: flex; align-items: center; height: 27px; flex: none; }
.status .rule { height: 14px; }
.macro { margin: 0 15px 0 16px; }
.views { display: flex; align-items: center; margin-left: auto; padding-right: 16px; }
.eye { margin-right: 6px; }
.cross { margin-right: 15px; }
.view { width: 23px; height: 24px; margin-left: 3px; }
.view.on { background: #dce0e7; border-radius: 2px; margin-left: 10px; }
.view + .rule { margin: 0 10px 0 11px; }
.zoom { font-size: 13px; }
.step { margin: 0 12px 0 10px; }
.step.plus { margin-left: 7px; }
.views input { appearance: none; width: 145px; height: 14px; }
.views input::-webkit-slider-runnable-track { height: 1px; background: linear-gradient(90deg, #3c4a60 50%, #d3d7df 50%); }
.views input::-webkit-slider-thumb { appearance: none; width: 13px; height: 13px; margin-top: -6px; border: 1px solid #444; border-radius: 7px; background: #f6f7f9; }

.mark { position: absolute; right: 8px; bottom: 8px; display: flex; align-items: center; opacity: .75; pointer-events: none; }
.mark div { display: flex; flex-direction: column; }
.mark b { font: 500 21px/24px "Noto Sans CJK SC", sans-serif; color: #4a8bd6; }
.mark span { font: 18px/20px "Liberation Sans", sans-serif; color: #3cba68; }
```
FILE: script.js
```
const LETTERS = "ABCDEFGHIJKLMNOPQRS".split("");
const VALUES = [4414, 6377, 5265, 47377, 4265, 62637, 45267];
const ROWS = 34;

const width = (letter) => (letter === "B" ? 195 : 94);

function cell(letter, row) {
  if (letter === "A" && row === 1) return '<td class="mid title"><div>数据</div></td>';
  if (letter === "A" && row >= 2 && row <= 8) {
    const seen = row < 4 ? ' class="seen"' : "";
    const ants = row === 2
      ? '<svg class="ants" width="94" height="162"><path d="M1 1H93V161H1Z"/></svg>' : "";
    return `<td class="mid"><div><a href="#"${seen}>${VALUES[row - 2]}</a></div>${ants}</td>`;
  }
  if (letter === "C" && row >= 7 && row <= 13) {
    return `<td class="num"><div>${VALUES[row - 7]}</div></td>`;
  }
  if (letter === "F" && row === 17) return '<td><div class="cursor"></div></td>';
  return "<td></td>";
}

const line = (label, row) =>
  `<tr><th${row === 17 ? ' class="on"' : ""}>${label}</th>` + LETTERS.map((l) => cell(l, row)).join("") + "</tr>";

const cols = '<col style="width:43px">' + LETTERS.map((l) => `<col style="width:${width(l)}px">`).join("");
const head = LETTERS.map((l) => `<th${l === "F" ? ' class="on"' : ""}>${l}</th>`).join("");
let body = "";
for (let r = 1; r <= ROWS; r++) body += line(r, r);
// the next row only peeks out above the sheet tabs
body += line("", ROWS + 1);
document.getElementById("cells").innerHTML =
  `<colgroup>${cols}</colgroup><thead><tr><th class="all"></th>${head}</tr></thead><tbody>${body}</tbody>`;
```
